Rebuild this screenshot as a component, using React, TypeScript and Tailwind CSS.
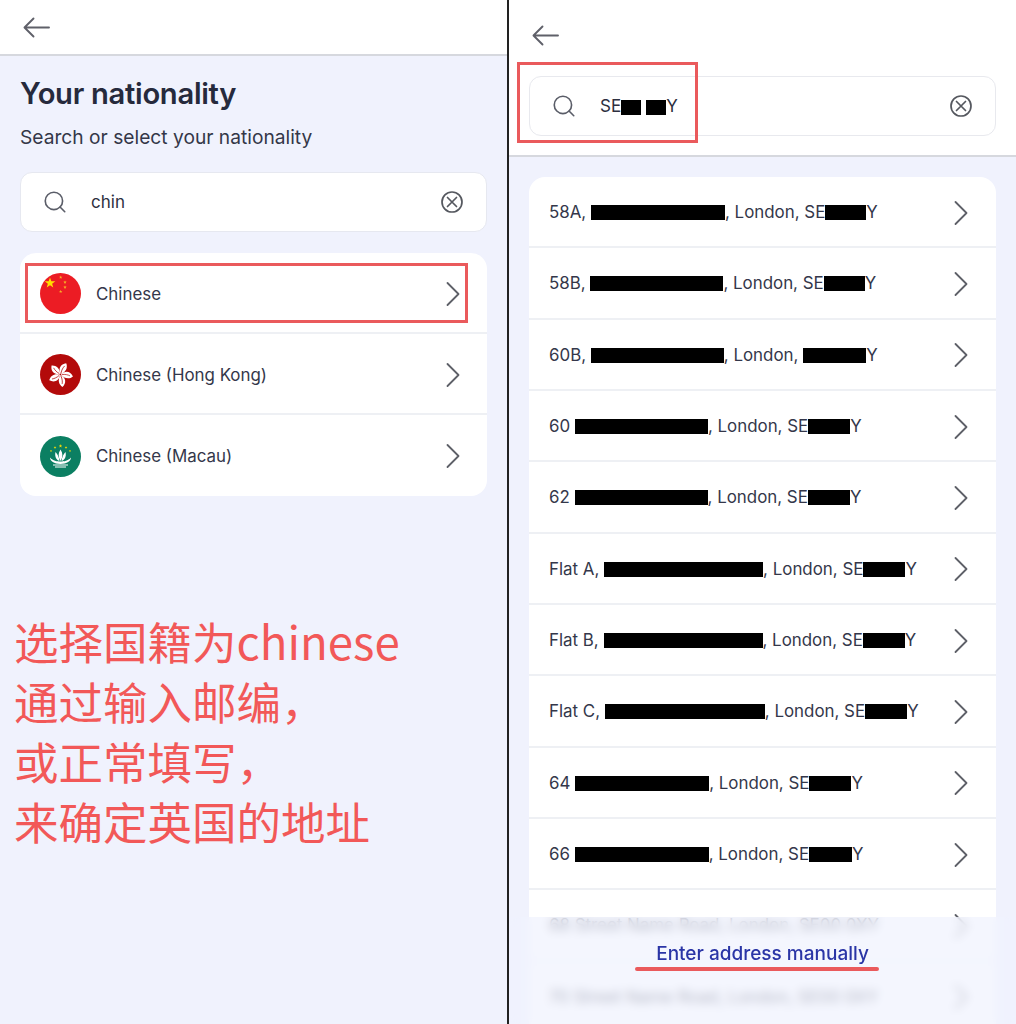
import { Search, ChevronRight } from "lucide-react"

const addresses = [
  { pre: "58A, ", a: 134, mid: ", London, SE", b: 41 },
  { pre: "58B, ", a: 133, mid: ", London, SE", b: 41 },
  { pre: "60B, ", a: 133, mid: ", London, ", b: 63 },
  { pre: "60 ", a: 133, mid: ", London, SE", b: 42 },
  { pre: "62 ", a: 133, mid: ", London, SE", b: 42 },
  { pre: "Flat A, ", a: 159, mid: ", London, SE", b: 42 },
  { pre: "Flat B, ", a: 159, mid: ", London, SE", b: 42 },
  { pre: "Flat C, ", a: 160, mid: ", London, SE", b: 42 },
  { pre: "64 ", a: 134, mid: ", London, SE", b: 42 },
  { pre: "66 ", a: 134, mid: ", London, SE", b: 43 },
]

function BackArrow() {
  return (
    <svg width="27" height="21" viewBox="0 0 27 21" fill="none" stroke="#5f6069" strokeWidth="1.9" strokeLinecap="round" strokeLinejoin="round">
      <path d="M26 10.5H2M10.5 1.5L1.5 10.5L10.5 19.5" />
    </svg>
  )
}

function ClearIcon() {
  return (
    <svg width="24" height="24" viewBox="0 0 24 24" fill="none" stroke="#55585f" strokeWidth="1.7" strokeLinecap="round">
      <circle cx="12" cy="12" r="10" />
      <path d="M7.5 7.5L16.5 16.5M16.5 7.5L7.5 16.5" />
    </svg>
  )
}

function Star({ x, y, r, fill = "#ffde00" }: { x: number; y: number; r: number; fill?: string }) {
  const pts = []
  for (let i = 0; i < 10; i++) {
    const rad = i % 2 === 0 ? r : r * 0.4
    const ang = (Math.PI / 5) * i - Math.PI / 2
    pts.push(`${x + rad * Math.cos(ang)},${y + rad * Math.sin(ang)}`)
  }
  return <polygon points={pts.join(" ")} fill={fill} />
}

function ChinaFlag() {
  return (
    <svg width="41" height="41" viewBox="0 0 41 41">
      <circle cx="20.5" cy="20.5" r="20.5" fill="#ec1c24" />
      <Star x={10} y={10} r={5.6} />
      <Star x={20.7} y={4.4} r={1.8} fill="#f6b026" />
      <Star x={25} y={9.2} r={1.8} fill="#f6b026" />
      <Star x={25} y={14.2} r={1.8} fill="#f6b026" />
      <Star x={20.7} y={18.5} r={1.8} fill="#f6b026" />
    </svg>
  )
}

function HongKongFlag() {
  return (
    <svg width="41" height="41" viewBox="0 0 41 41">
      <circle cx="20.5" cy="20.5" r="20.5" fill="#b30a0a" />
      {[20, 92, 164, 236, 308].map((r) => (
        <g key={r} transform={`rotate(${r} 20.5 20.5)`}>
          <path d="M20.5 20 C16 16 17 10.5 22 8 C25 11 25 16.5 20.5 20Z" fill="#fff" />
          <path d="M20.5 19 C20 16 20.5 13 21.5 11" stroke="#b30a0a" strokeWidth="0.7" fill="none" />
        </g>
      ))}
    </svg>
  )
}

function MacauFlag() {
  return (
    <svg width="41" height="41" viewBox="0 0 41 41">
      <circle cx="20.5" cy="20.5" r="20.5" fill="#0b7f62" />
      <Star x={20.5} y={10} r={1.9} />
      <Star x={15} y={11.5} r={1.4} />
      <Star x={26} y={11.5} r={1.4} />
      <Star x={11} y={15} r={1.2} />
      <Star x={30} y={15} r={1.2} />
      <path d="M20.5 13.5 C23 17 23 21 20.5 25 C18 21 18 17 20.5 13.5Z" fill="#fff" />
      <path d="M15.5 16 C17.5 18 19 21 19.5 25 C16 24 14.5 20 15.5 16Z" fill="#fff" />
      <path d="M25.5 16 C23.5 18 22 21 21.5 25 C25 24 26.5 20 25.5 16Z" fill="#fff" />
      <path d="M10 21.5 C13 25 17 25.5 20.5 25.5 C24 25.5 28 25 31 21.5 C31 25 27 28 20.5 28 C14 28 10 25 10 21.5Z" fill="#fff" />
      <path d="M13 29 H28 M15 31 H26" stroke="#fff" strokeWidth="1.1" />
    </svg>
  )
}

function SearchBox({ children, border }: { children: React.ReactNode; border: string }) {
  return (
    <div className={`flex h-[60px] items-center rounded-xl bg-white pl-[21px] pr-[22px] border ${border}`}>
      <Search size={26} strokeWidth={1.5} className="text-[#5a5d68]" />
      <div className="ml-[23px] flex flex-1 items-center pt-[2px] text-[17px] text-[#2d3040]">{children}</div>
      <ClearIcon />
    </div>
  )
}

function NationRow({ flag, label, last }: { flag: React.ReactNode; label: string; last?: boolean }) {
  return (
    <div className={`flex h-[81px] items-center pl-[20px] pr-[24px] ${last ? "pt-[1px]" : "border-b-2 border-[#eef0f4] pt-[2px]"}`}>
      {flag}
      <span className="ml-[15px] flex-1 pt-[2px] text-[16.9px] text-[#34374a]">{label}</span>
      <ChevronRight size={44} strokeWidth={1} className="mr-[-12px] text-[#5e6068]" />
    </div>
  )
}

function AddressRow({ children }: { children: React.ReactNode }) {
  return (
    <div className="flex h-[71.35px] shrink-0 items-center border-b-2 border-[#eef0f4] pl-[20px] pr-[24px] pt-[2px]">
      <div className="flex-1 whitespace-pre text-[16.9px] text-[#34374a]">{children}</div>
      <ChevronRight size={44} strokeWidth={1} className="mr-[-11px] text-[#5e6068]" />
    </div>
  )
}

export default function App() {
  return (
    <div className="relative flex h-[1024px] w-[1016px] overflow-hidden bg-[#f0f2fd] font-['Inter','Noto_Sans_CJK_SC',sans-serif]">
      {/* left phone */}
      <div className="flex w-[507px] shrink-0 flex-col">
        <div className="flex h-[56px] items-center border-b-2 border-[#d6d8de] bg-white pl-[23px]">
          <BackArrow />
        </div>
        <div className="px-[20px]">
          <h1 className="mt-[18px] text-[29.2px] font-semibold leading-[40px] tracking-[-0.3px] text-[#262a3c]">Your nationality</h1>
          <p className="mt-[10px] text-[19.2px] leading-[26px] text-[#343748]">Search or select your nationality</p>
          <div className="mt-[22px]">
            <SearchBox border="border-[#e6e8f0]">chin</SearchBox>
          </div>
          <div className="mt-[21px] overflow-hidden rounded-2xl bg-white">
            <NationRow flag={<ChinaFlag />} label="Chinese" />
            <NationRow flag={<HongKongFlag />} label="Chinese (Hong Kong)" />
            <NationRow flag={<MacauFlag />} label="Chinese (Macau)" last />
          </div>
        </div>
        <div className="ml-[14px] mt-[114px] font-['Noto_Sans_CJK_SC',sans-serif] text-[44.5px] font-normal leading-[60px] text-[#f25858]">
          <div>选择国籍为<span className="text-[45.6px]">chinese</span></div>
          <div>通过输入邮编，</div>
          <div>或正常填写，</div>
          <div>来确定英国的地址</div>
        </div>
      </div>

      {/* right phone */}
      <div className="flex flex-1 flex-col border-l-2 border-[#222]">
        <div className="h-[157px] shrink-0 border-b-2 border-[#d6d8de] bg-white px-[20px]">
          <div className="ml-[3px] mt-[25px] h-[21px] leading-none">
            <BackArrow />
          </div>
          <div className="mt-[30px]">
            <SearchBox border="border-[#e8e9ee]">
              <span>SE</span>
              <span className="h-[15px] w-[20px] bg-black" />
              <span className="ml-[5px] h-[15px] w-[20px] bg-black" />
              <span>Y</span>
            </SearchBox>
          </div>
        </div>
        <div className="mx-[20px] mt-[20px] flex flex-1 flex-col overflow-hidden rounded-t-2xl bg-white">
          {addresses.map((row) => (
            <AddressRow key={row.pre}>
              {row.pre}
              <span className="inline-block h-[15px] bg-black align-[-2px]" style={{ width: row.a }} />
              {row.mid}
              <span className="inline-block h-[15px] bg-black align-[-2px]" style={{ width: row.b }} />
              Y
            </AddressRow>
          ))}
          <AddressRow>68 Street Name Road, London, SE00 0XY</AddressRow>
          <AddressRow>70 Street Name Road, London, SE00 0XY</AddressRow>
        </div>
      </div>

      {/* frosted footer over the list */}
      <div className="absolute bottom-0 left-[509px] right-0 flex h-[107px] justify-center bg-[#f0f2fd]/70 pt-[24px] backdrop-blur-[5px]">
        <span className="text-[19px] font-medium leading-[26px] text-[#2a35a6]">Enter address manually</span>
      </div>

      {/* red annotations */}
      <div className="absolute left-[25px] top-[263px] h-[60px] w-[443px] border-[3px] border-[#ea5a5c]" />
      <div className="absolute left-[517px] top-[62px] h-[81px] w-[181px] border-[3px] border-[#ea5a5c]" />
      <div className="absolute left-[635px] top-[967px] h-[4px] w-[244px] rounded-full bg-[#ea5a5c]" />
    </div>
  )
}
